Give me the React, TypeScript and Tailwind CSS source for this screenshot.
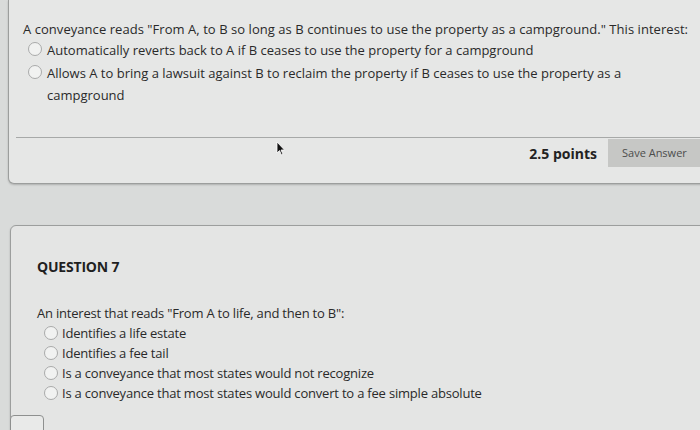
import React from "react";

const q6Options = [
  "Automatically reverts back to A if B ceases to use the property for a campground",
  "Allows A to bring a lawsuit against B to reclaim the property if B ceases to use the property as a campground",
];

const q7Options = [
  "Identifies a life estate",
  "Identifies a fee tail",
  "Is a conveyance that most states would not recognize",
  "Is a conveyance that most states would convert to a fee simple absolute",
];

function Radio() {
  return (
    <span className="mt-[3px] inline-block h-[14px] w-[14px] shrink-0 rounded-full border border-[#a9aaaa] bg-[#f1f2f1]" />
  );
}

export default function App() {
  return (
    <div className="relative h-[430px] w-[700px] overflow-hidden bg-[#d9dbda] font-['Open_Sans',sans-serif] text-[13px] text-[#2a2a2a]">
      {/* previous question card, top is scrolled off */}
      <div className="-mr-4 ml-[8px] h-[184px] rounded-bl-md border border-t-0 border-[#9c9e9d] bg-[#e6e7e6] shadow-[0_1px_2px_rgba(0,0,0,0.2)]">
        <div className="pl-[14px] pt-[20px]">
          <p className="leading-[19px] tracking-[0.05px]">
            A conveyance reads "From A, to B so long as B continues to use the property as a campground." This interest:
          </p>
          <div className="flex flex-col gap-[1px] pl-[5px]">
            {q6Options.map((o) => (
              <div key={o} className="flex items-start gap-[5px]">
                <Radio />
                <span className="max-w-[600px] leading-[22px]">{o}</span>
              </div>
            ))}
          </div>
        </div>
        <div className="ml-[7px] mt-[31px] border-t border-[#a7a9a8]" />
        <div className="mt-[1px] flex items-center justify-end">
          <span className="mr-[11px] text-[14px] font-bold text-[#222]">2.5 points</span>
          <span className="-mr-[10px] flex h-[28px] w-[117px] items-center bg-[#c6c7c5] pl-[14px] text-[11px] text-[#4c4d4c]">
            Save Answer
          </span>
        </div>
      </div>

      {/* question 7 card */}
      <div className="-mr-4 ml-[10px] mt-[41px] h-[220px] rounded-tl-md border border-[#9c9e9d] bg-[#e4e5e4] shadow-[0_1px_2px_rgba(0,0,0,0.2)]">
        <div className="pl-[26px] pt-[30px]">
          <h2 className="text-[14px] font-bold tracking-[-0.2px] text-[#1f1f1f]">QUESTION 7</h2>
          <p className="mt-[27px] leading-[19px] tracking-[-0.2px]">
            An interest that reads "From A to life, and then to B":
          </p>
          <div className="flex flex-col pl-[7px]">
            {q7Options.map((o) => (
              <div key={o} className="flex items-start gap-[4px]">
                <Radio />
                <span className="leading-[20px] tracking-[-0.2px]">{o}</span>
              </div>
            ))}
          </div>
        </div>
      </div>

      {/* bottom-left control peeking in */}
      <div className="absolute left-[10px] top-[415px] h-[20px] w-[34px] rounded-sm border border-[#8e908f] bg-[#e9eae9]" />

      {/* mouse pointer */}
      <svg className="absolute left-[276px] top-[141px]" width="10" height="15" viewBox="0 0 10 15">
        <path d="M1 1 L1 12 L3.5 9.5 L5.5 14 L7 13.3 L5 9 L8.5 9 Z" fill="#111" stroke="#fff" strokeWidth="0.8" />
      </svg>
    </div>
  );
}
